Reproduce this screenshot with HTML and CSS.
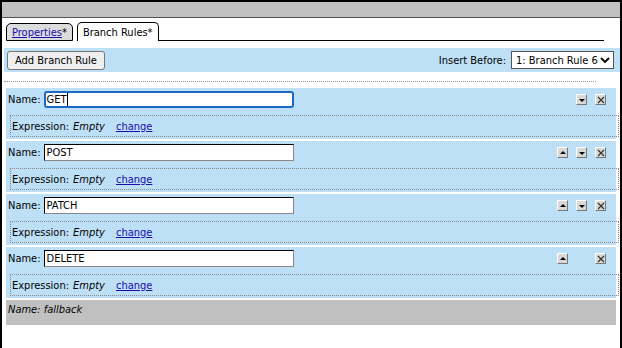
FILE: index.html
```html
<!DOCTYPE html>
<html>
<head>
<meta charset="utf-8">
<link rel="stylesheet" href="styles.css">
</head>
<body>
<div class="window">
  <div class="titlebar"></div>
  <div class="tabs">
    <div class="tab tab-inactive"><a href="#">Properties</a>*</div>
    <div class="tab tab-active">Branch Rules*</div>
    <div class="tab-fill"></div>
  </div>
  <div class="toolbar">
    <button class="btn">Add Branch Rule</button>
    <div class="insert">
      <span class="insert-label">Insert Before:</span>
      <div class="select"><span>1: Branch Rule 6</span>
        <svg class="chev" width="10" height="8" viewBox="0 0 10 8"><path d="M1 2 L5 6 L9 2" fill="none" stroke="#000" stroke-width="1.8"/></svg>
      </div>
    </div>
  </div>
  <div class="sep"></div>
  <div class="rules">
    <div class="rule">
      <div class="rule-head">
        <span class="lbl">Name:</span>
        <div class="name-input focused">GET<span class="caret"></span></div>
        <div class="ctrls">
          <span class="ib hidden"></span>
          <span class="ib"><svg width="8" height="8" viewBox="0 0 8 8"><path d="M1 3 H7 L4 6 Z" fill="#000"/></svg></span>
          <span class="ib"><svg width="8" height="8" viewBox="0 0 8 8"><path d="M1 1 L7 7 M7 1 L1 7" stroke="#333" stroke-width="1.2"/></svg></span>
        </div>
      </div>
      <div class="expr"><span>Expression:</span> <em>Empty</em> <a href="#">change</a></div>
    </div>
    <div class="rule">
      <div class="rule-head">
        <span class="lbl">Name:</span>
        <div class="name-input">POST</div>
        <div class="ctrls">
          <span class="ib"><svg width="8" height="8" viewBox="0 0 8 8"><path d="M1 5 H7 L4 2 Z" fill="#000"/></svg></span>
          <span class="ib"><svg width="8" height="8" viewBox="0 0 8 8"><path d="M1 3 H7 L4 6 Z" fill="#000"/></svg></span>
          <span class="ib"><svg width="8" height="8" viewBox="0 0 8 8"><path d="M1 1 L7 7 M7 1 L1 7" stroke="#333" stroke-width="1.2"/></svg></span>
        </div>
      </div>
      <div class="expr"><span>Expression:</span> <em>Empty</em> <a href="#">change</a></div>
    </div>
    <div class="rule">
      <div class="rule-head">
        <span class="lbl">Name:</span>
        <div class="name-input">PATCH</div>
        <div class="ctrls">
          <span class="ib"><svg width="8" height="8" viewBox="0 0 8 8"><path d="M1 5 H7 L4 2 Z" fill="#000"/></svg></span>
          <span class="ib"><svg width="8" height="8" viewBox="0 0 8 8"><path d="M1 3 H7 L4 6 Z" fill="#000"/></svg></span>
          <span class="ib"><svg width="8" height="8" viewBox="0 0 8 8"><path d="M1 1 L7 7 M7 1 L1 7" stroke="#333" stroke-width="1.2"/></svg></span>
        </div>
      </div>
      <div class="expr"><span>Expression:</span> <em>Empty</em> <a href="#">change</a></div>
    </div>
    <div class="rule">
      <div class="rule-head">
        <span class="lbl">Name:</span>
        <div class="name-input">DELETE</div>
        <div class="ctrls">
          <span class="ib"><svg width="8" height="8" viewBox="0 0 8 8"><path d="M1 5 H7 L4 2 Z" fill="#000"/></svg></span>
          <span class="ib hidden"></span>
          <span class="ib"><svg width="8" height="8" viewBox="0 0 8 8"><path d="M1 1 L7 7 M7 1 L1 7" stroke="#333" stroke-width="1.2"/></svg></span>
        </div>
      </div>
      <div class="expr"><span>Expression:</span> <em>Empty</em> <a href="#">change</a></div>
    </div>
  </div>
  <div class="fallback"><em>Name: fallback</em></div>
</div>
</body>
</html>
```

FILE: styles.css
```css
* { box-sizing: border-box; }
html, body { margin: 0; padding: 0; background: #fff; }
body {
  font-family: "DejaVu Sans Condensed", "DejaVu Sans", sans-serif;
  font-size: 11px;
  color: #000;
}
.window {
  width: 622px;
  height: 348px;
  border: 2px solid #000;
  border-bottom: none;
  overflow: hidden;
}
.titlebar {
  height: 16px;
  background: #c0c0c0;
  border-bottom: 1px solid #555;
}
.tabs {
  display: flex;
  align-items: flex-end;
  margin: 4px 16px 0 4px;
  height: 19px;
}
.tab {
  height: 19px;
  border: 1px solid #000;
  border-radius: 5px 5px 0 0;
  padding: 3px 5px 0 5px;
  line-height: 14px;
  margin-right: 4px;
}
.tab-inactive {
  background: #dcdcdc;
  height: 18px;
  padding-top: 2px;
}
.tab-inactive a { color: #1a0dab; text-decoration: underline; }
.tab-active {
  background: #fff;
  border-bottom: none;
  height: 19px;
}
.tab-fill {
  flex: 1;
  border-bottom: 1px solid #000;
  height: 1px;
  margin-left: -4px;
}
.toolbar {
  margin: 7px 0 0 2px;
  height: 24px;
  background: #bee0f6;
  display: flex;
  align-items: center;
  justify-content: space-between;
  padding: 0 6px 0 3px;
}
.btn {
  font: inherit;
  height: 19px;
  padding: 0 7px;
  background: #efefef;
  border: 1px solid #767676;
  border-radius: 3px;
  color: #000;
}
.insert { display: flex; align-items: center; }
.insert-label { margin-right: 5px; }
.select {
  height: 18px;
  width: 103px;
  border: 1px solid #555;
  background: #fff;
  display: flex;
  align-items: center;
  justify-content: space-between;
  padding: 0 3px 0 4px;
}
.sep {
  margin: 9px 0 0 2px;
  width: 592px;
  border-top: 1px dotted #999;
}
.rules { margin: 6px 0 0 4px; }
.rule {
  width: 610px;
  background: #bee0f6;
  margin-bottom: 2px;
  padding: 0 0 2px 0;
}
.rule-head {
  display: flex;
  align-items: center;
  height: 23px;
  padding: 0 10px 0 2px;
}
.lbl { margin-right: 3px; }
.name-input {
  width: 250px;
  height: 17px;
  border: 1px solid #000;
  border-right-color: #888;
  border-bottom-color: #888;
  background: #fff;
  padding: 0 2px;
  line-height: 15px;
  display: flex;
  align-items: center;
}
.name-input.focused {
  border: 2px solid #1c68c7;
  border-radius: 3px;
  padding: 0 1px;
}
.caret { display: inline-block; width: 1px; height: 13px; background: #000; }
.ctrls { margin-left: auto; display: flex; gap: 8px; }
.ib {
  width: 11px;
  height: 11px;
  background: #d8d8d8;
  border: 1px solid;
  border-color: #fff #777 #777 #fff;
  display: flex;
  align-items: center;
  justify-content: center;
}
.ib.hidden { visibility: hidden; }
.expr {
  margin: 4px 0 0 4px;
  width: 609px;
  height: 22px;
  border: 1px dotted #888;
  padding: 0 0 0 1px;
  display: flex;
  align-items: center;
}
.expr em { margin: 0 0 0 4px; }
.expr a { margin-left: 11px; color: #1a0dab; text-decoration: underline; }
.fallback {
  margin: 1px 0 0 4px;
  width: 610px;
  height: 25px;
  background: #c0c0c0;
  padding: 3px 2px;
}
```
